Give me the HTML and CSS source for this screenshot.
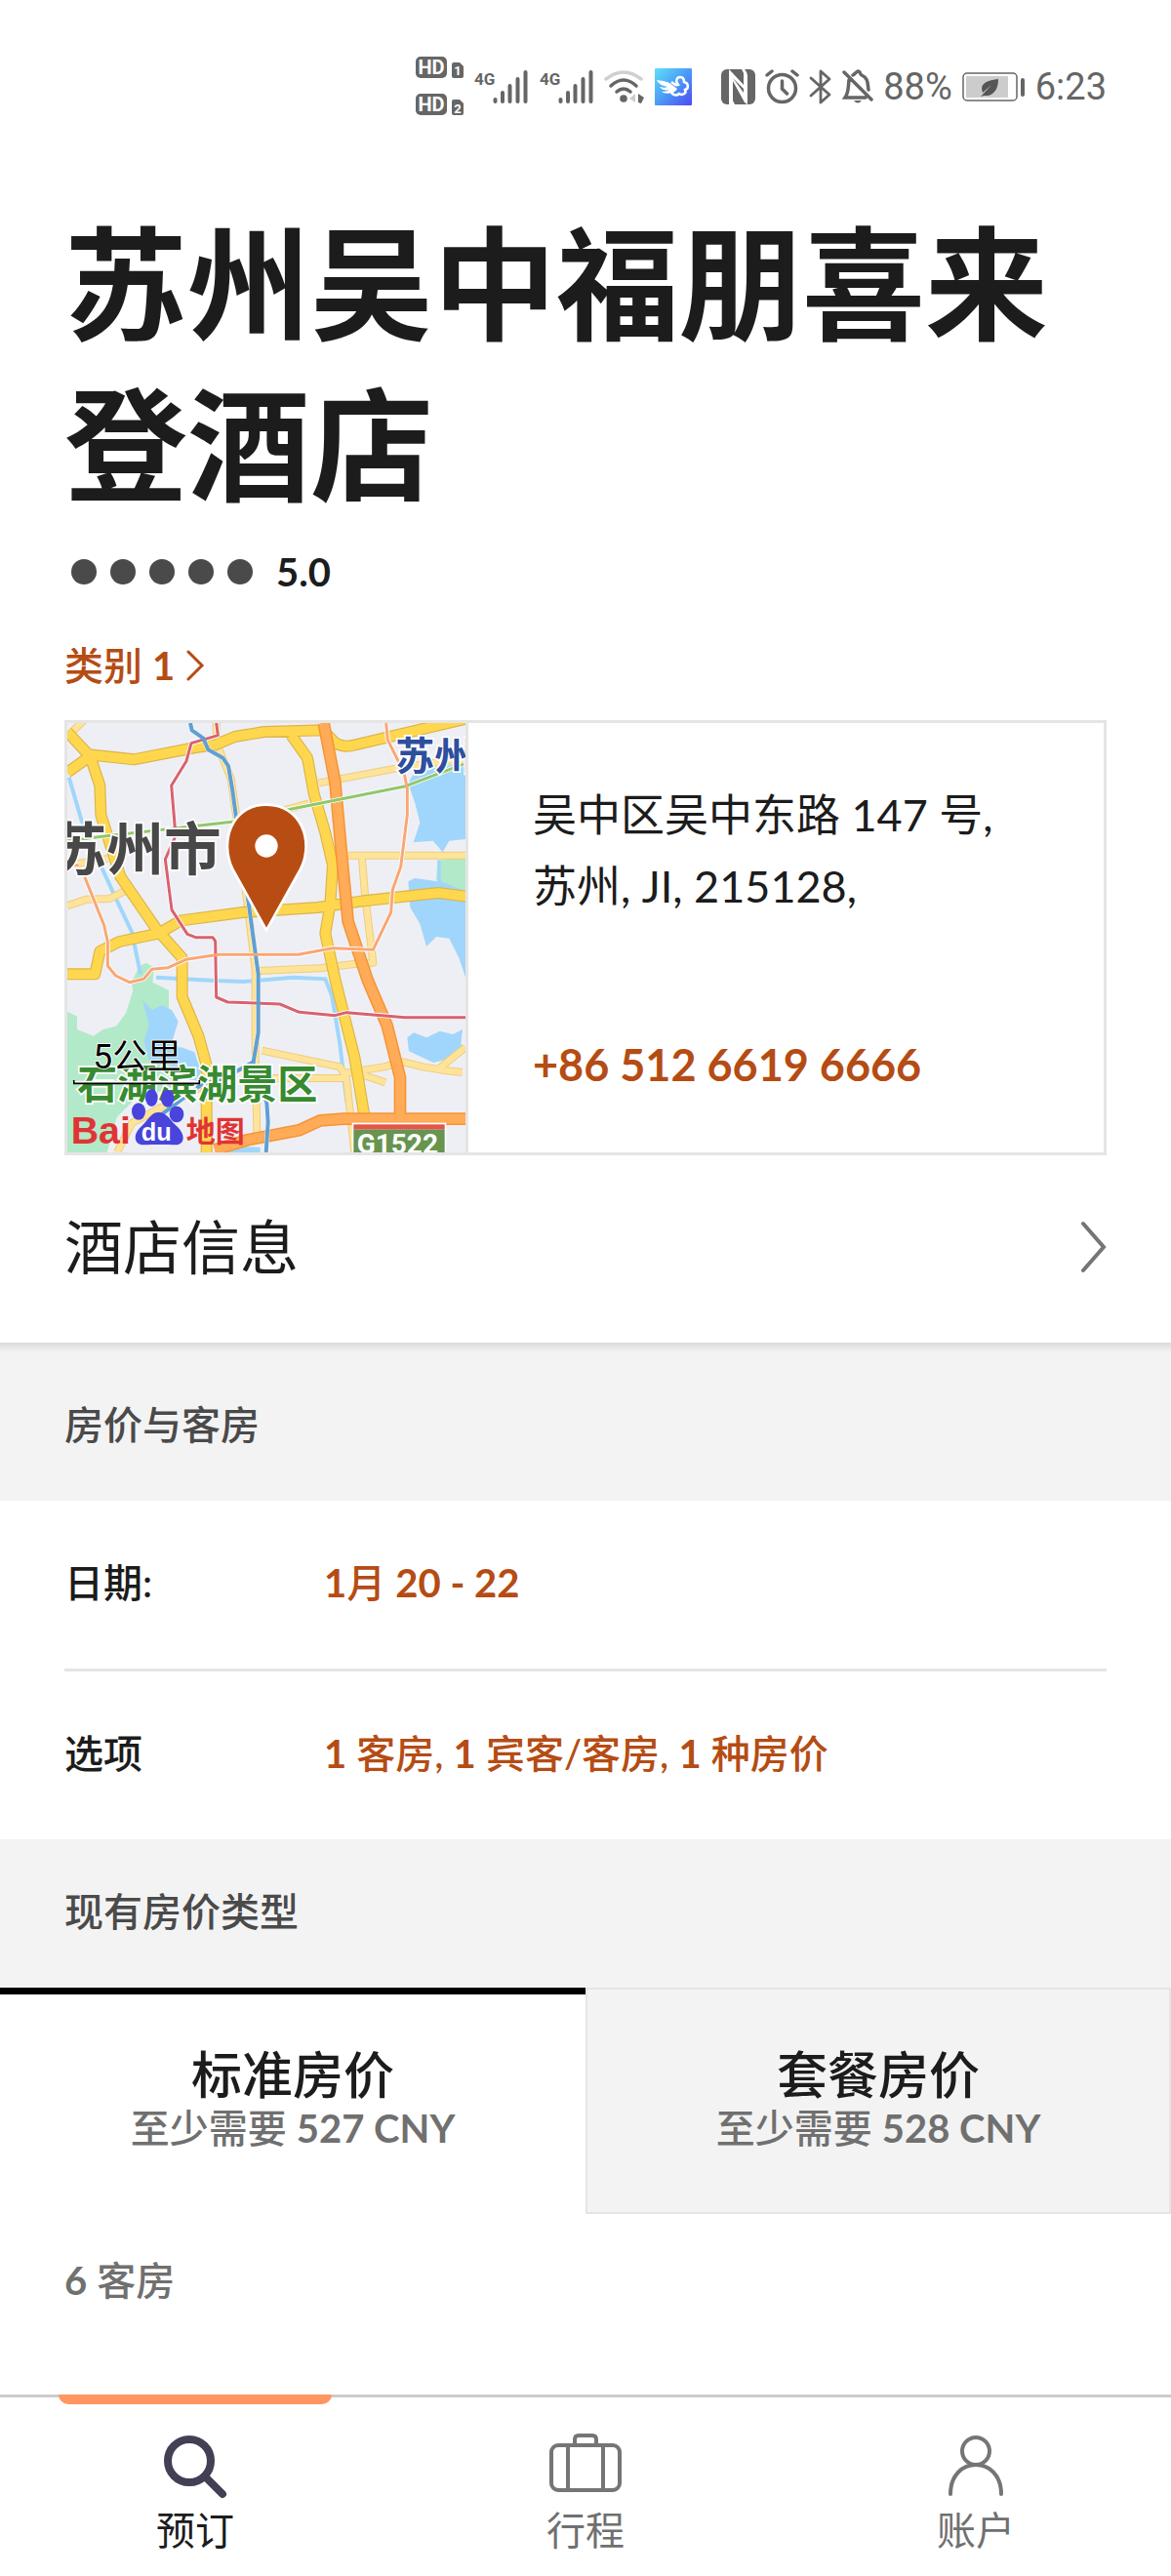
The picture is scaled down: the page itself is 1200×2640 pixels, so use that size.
FILE: index.html
```html
<!DOCTYPE html>
<html lang="zh-CN">
<head>
    <meta charset="UTF-8">
    <meta name="viewport" content="width=device-width, initial-scale=1.0">
    <title>苏州吴中福朋喜来登酒店</title>
    <link rel="stylesheet" href="styles.css">
</head>
<body>
    <header class="status-bar">
        <svg class="hd" width="50" height="62" viewBox="0 0 50 62">
            <rect x="0" y="0" width="32" height="22" rx="5"/>
            <text class="hd-text" x="16" y="18">HD</text>
            <path d="M37 8q0-2 2-2h6l4 4v10q0 2-2 2h-8q-2 0-2-2z"/>
            <text class="sim-text" x="43" y="19">1</text>
            <rect x="0" y="38" width="32" height="22" rx="5"/>
            <text class="hd-text" x="16" y="56">HD</text>
            <path d="M37 46q0-2 2-2h6l4 4v10q0 2-2 2h-8q-2 0-2-2z"/>
            <text class="sim-text" x="43" y="58">2</text>
        </svg>
        <div class="signals">
            <svg width="56" height="36" viewBox="0 0 56 36">
                <text class="net-text" x="0" y="16">4G</text>
                <path class="bars" d="M21.500 31v2M29 24v9M36.500 17v16M44.500 10v23M52.500 3v30"/>
            </svg>
            <svg width="56" height="36" viewBox="0 0 56 36">
                <text class="net-text" x="0" y="16">4G</text>
                <path class="bars" d="M21.500 31v2M29 24v9M36.500 17v16M44.500 10v23M52.500 3v30"/>
            </svg>
        </div>
        <svg width="42" height="36" viewBox="0 0 42 36">
            <g fill="none" stroke-width="3.500" stroke-linecap="round">
                <path stroke="#d0d0d0" d="M2 10Q20-4 38 10"/>
                <path stroke="#666" d="M7 17Q20 5 33 17M13 23Q20 17 27 23"/>
            </g>
            <circle cx="20" cy="30" r="3.800"/>
            <path fill="#ccc" d="M32 25v9l-6-4z"/>
            <path d="M35 25l6 4-3 6-3-1z"/>
        </svg>
        <svg class="app-icon" width="38" height="38" viewBox="0 0 38 38">
            <defs>
                <linearGradient id="sky" x1="0" y1="0" x2="1" y2="1">
                    <stop offset="0" stop-color="#5fe0fb"/>
                    <stop offset=".5" stop-color="#4b9bf5"/>
                    <stop offset="1" stop-color="#5048f4"/>
                </linearGradient>
            </defs>
            <rect width="38" height="38" rx="1" fill="url(#sky)"/>
            <path fill="#fff" d="M2 12c8 1 13 2 17 6l4 3c-2 5-12 6-16 3 4 0 6-1 8-2-4 1-8 0-10-3 4 1 6 1 8 0-5-1-9-3-11-7z"/>
            <path fill="none" stroke="#fff" stroke-width="2.500" d="M17 14c4 3 5 4 7 3-3-3-2-8 2-8 4 0 4 3 4 5 5 1 5 7 1 8 2 4-3 6-6 4-3 3-8 1-8-3"/>
        </svg>
        <svg class="nfc" width="35" height="36" viewBox="0 0 35 36">
            <rect width="35" height="36" rx="6"/>
            <path fill="#fff" d="M8 36V0l3 3 12 13V4l-2-4h3q3 3 3 8v28l-3-2-12-22v20l2 4z"/>
            <path d="M12 9l11 11v4z"/>
        </svg>
        <svg width="35" height="36" viewBox="0 0 35 36">
            <g fill="none" stroke="#666" stroke-width="3.500" stroke-linecap="round">
                <circle cx="17.500" cy="19.500" r="14"/>
                <path d="M17.500 12v8l5 5M2 6l5-4M28 2l5 4"/>
            </g>
        </svg>
        <svg class="bluetooth" width="24" height="36" viewBox="0 0 24 36">
            <path fill="none" stroke="#666" stroke-width="2.800" stroke-linejoin="round" stroke-linecap="round" d="M2 9l19 17-9 8V2l9 8L2 27"/>
        </svg>
        <svg class="bell" width="32" height="36" viewBox="0 0 32 36">
            <g fill="none" stroke="#666" stroke-width="3.500" stroke-linecap="round">
                <path d="M2 3l28 28M7 11c-1 8 0 12-4 18h21M11 6c2-1 3-3 5-4 3 0 2 3 4 4 7 3 6 9 7 15"/>
            </g>
            <path d="M12 32h8q-4 5-8 0z"/>
        </svg>
        <span class="battery-level">88%</span>
        <svg class="battery" width="65" height="31" viewBox="0 0 65 31">
            <rect x="1" y="1" width="55" height="28" rx="4" fill="none" stroke="#666" stroke-width="1.500"/>
            <rect x="4" y="4" width="43" height="22" rx="1" fill="#ccc"/>
            <path fill="#555" d="M37 7c-10 1-20 4-16 14l9-8-11 12 3-1c9 1 15-5 15-17z"/>
            <rect x="60" y="6" width="4" height="19" rx="2"/>
        </svg>
        <time class="clock">6:23</time>
    </header>

    <main>
        <section class="hotel">
            <h1>苏州吴中福朋喜来登酒店</h1>
            <div class="rating">
                <span class="dot"></span>
                <span class="dot"></span>
                <span class="dot"></span>
                <span class="dot"></span>
                <span class="dot"></span>
                <b class="score">5.0</b>
            </div>
            <a class="category" href="#category">
                <span>类别 <b>1</b></span>
                <svg width="20" height="32" viewBox="0 0 20 32"><path fill="none" stroke="#b54c14" stroke-width="3" stroke-linecap="round" d="M2 2l14 14L2 30"/></svg>
            </a>

            <div class="location">
                <svg class="map" viewBox="27 33 1224 1320" preserveAspectRatio="xMidYMid slice">
                    <rect x="27" y="33" width="1224" height="1320" fill="#eeeff5"/>
                    <!-- parks -->
                    <path fill="#b2e9c9" d="M27 920l30 15v40l50 20 30-20 40-10 30-40 22-70-5-25 25-50 20-10 25 15-5 45 50 25v60l10 90 50 60-10 80-150 40-60 60-30 108H27zM1165 455l86-10v120l-90-50z"/>
                    <!-- water -->
                    <path fill="#a0d6fb" d="M1075 220l20-40 156-25v235l-50 5-20 35-30-35-60 5 20-60-15-60zM1075 520l20-10 70 10v-65h10v65l65 25 11 30v240l-20-60-30-60-40-5-30 30-20-70-30-50zM1072 1000l20-15 40 15 40-20 40 10 30-15-5 45 10 10-45 35-50 12-75-35zM258 885l30 30 30-15 30 15 20 35-15 50-15 35 40-5 40 15 20 60-20 50-50-40-30-40-60-5-15-60 15-50zM500 1350q50-20 120-12v15H500z"/>
                    <path class="river" d="M32 200l38 130 50 120 60 130 45 95 27 130M300 815l180 10 90 3 150-13 100 5 20 50 25 150 20 170 25 100"/>
                    <!-- minor roads -->
                    <g class="road-minor-edge">
                        <path id="minor" d="M27 595l60-20 70-2 50-25M800 217l240-45 210-30M485 33v60l45 110 20 140 25 200 30 250v250l5 250M890 440h361M932 440l10 120 25 210-65 5-100 12-190 8M625 1040l240 50 20 35 25 228M880 1110l60-10 60-10 60-15 60 15 60 10 61 7M920 1110l85 28M1170 1095l81-65M620 1125h260M180 1353l45-90 150-80 80-40M30 470l120-20M640 315l130-35M27 75l50-50"/>
                    </g>
                    <g class="road-minor">
                        <use href="#minor"/>
                    </g>
                    <!-- main roads -->
                    <g class="road-edge">
                        <path id="major" d="M27 60l65 70 140 15 190-37 60-8 60-25 90-15 180-5 40 40q25 15 60 5l340-80M27 185l70-50 30 90 3 90 60 190 110 160 80 90v120l50 120 25 90v278M715 70l50 70 20 110 35 120 23 100-8 120-15 90 30 140 30 120 30 120 30 180M27 805h85l15-70 60-30 120-25 70-40 190-25 230-15 140-20 230-25 80 10 60 15"/>
                    </g>
                    <g class="road-major">
                        <use href="#major"/>
                    </g>
                    <!-- highways -->
                    <g class="highway-edge">
                        <path id="highway" d="M815 33l35 180 20 220 20 210 60 180 60 140 40 160v120M480 1345l100-30 160-30 65-30 70-5h376"/>
                    </g>
                    <g class="highway">
                        <use href="#highway"/>
                    </g>
                    <!-- metro lines -->
                    <g class="metro-casing">
                        <path id="metro-green" d="M27 395l120-15 400-45 170-38 350-70 184-70"/>
                        <path id="metro-red" d="M485 33l5 38-82 24-15 55-46 75 13 155-32 72 20 155 48 75 25 10h53l8 12 3 172 35 15 160 6 60 25 110 10 35-9 180 15h186"/>
                        <path id="metro-blue" d="M405 33l5 22 35 25 15 35 45 25 17 25 12 70 15 110 35 240 30 220v180l-15 90-90 50-70 20-120 90-1 93M600 1080l40 120 4 60-6 93"/>
                        <path id="metro-orange" d="M80 505l60 150 11 50v75l25 30 42 20 44-10 25-30 50-5 55-25 100-15h245l105-20 125 5 55-115 5-70 25-70 20-160v-80l-10-50-50-100-5-52M27 470h35"/>
                    </g>
                    <g class="metro">
                        <use class="metro-green" href="#metro-green"/>
                        <use class="metro-red" href="#metro-red"/>
                        <use class="metro-blue" href="#metro-blue"/>
                        <use class="metro-orange" href="#metro-orange"/>
                    </g>
                    <!-- labels -->
                    <text class="map-city" x="-28" y="487">苏州市</text>
                    <text class="map-station" x="1036" y="176">苏州</text>
                    <text class="map-park" x="58" y="1187">石湖滨湖景区</text>
                    <text class="map-scale" x="106" y="1094">5公里</text>
                    <path fill="none" stroke="#fff" stroke-width="10" d="M42 1138h397"/>
                    <path fill="none" stroke="#000" stroke-width="5" d="M47 1131v10h386v-10"/>
                    <g fill="#4844dc">
                        <ellipse cx="246" cy="1227" rx="21" ry="26"/>
                        <ellipse cx="286" cy="1185" rx="19" ry="27"/>
                        <ellipse cx="335" cy="1187" rx="20" ry="27"/>
                        <ellipse cx="363" cy="1236" rx="22" ry="25"/>
                        <path d="M308 1230c25 0 35 25 55 42 30 28 24 58-3 58-25-1-70-1-100 0-28 0-32-32-8-54 25-22 30-46 56-46z"/>
                    </g>
                    <text class="baidu-red" x="38" y="1327">Bai</text>
                    <text class="baidu-white" x="254" y="1317">du</text>
                    <text class="baidu-map" x="392" y="1321">地图</text>
                    <rect x="902" y="1262" width="290" height="95" fill="#fff"/>
                    <rect x="907" y="1267" width="280" height="16" fill="#e2574a"/>
                    <rect x="907" y="1283" width="280" height="75" fill="#67944f"/>
                    <text class="map-highway" x="1042" y="1357">G1522</text>
                    <!-- hotel pin -->
                    <path fill="#b84d14" stroke="#fff" stroke-width="8" d="M639 670L535 482C495 400 530 284 639 284s147 116 105 198z"/>
                    <circle cx="639" cy="411" r="35" fill="#fff"/>
                </svg>
                <div class="contact">
                    <address>吴中区吴中东路 147 号,<br>苏州, JI, 215128,</address>
                    <a class="phone" href="tel:+8651266196666">+86 512 6619 6666</a>
                </div>
            </div>
        </section>

        <a class="hotel-info" href="#info">
            <span>酒店信息</span>
            <svg width="26" height="54" viewBox="0 0 26 54"><path fill="none" stroke="#757575" stroke-width="4" stroke-linecap="round" d="M2 3l21 24L2 51"/></svg>
        </a>
        <div class="shadow"></div>

        <h2 class="section-title">房价与客房</h2>
        <div class="stay">
            <div class="stay-row">
                <span class="stay-label">日期:</span>
                <a href="#dates"><b>1</b>月 <b>20 - 22</b></a>
            </div>
            <div class="stay-row">
                <span class="stay-label">选项</span>
                <a href="#options"><b>1</b> 客房, <b>1</b> 宾客/客房, <b>1</b> 种房价</a>
            </div>
        </div>

        <h2 class="section-title">现有房价类型</h2>
        <div class="tabs">
            <button class="tab active" type="button">
                <span class="tab-name">标准房价</span>
                <span class="tab-price">至少需要 <b>527 CNY</b></span>
            </button>
            <button class="tab" type="button">
                <span class="tab-name">套餐房价</span>
                <span class="tab-price">至少需要 <b>528 CNY</b></span>
            </button>
        </div>
        <p class="room-count"><b>6</b> 客房</p>
    </main>

    <nav class="bottom-nav">
        <a class="nav-item current" href="#book">
            <svg width="76" height="68" viewBox="0 0 76 68">
                <g fill="none" stroke="#433f54" stroke-linecap="round">
                    <circle cx="32" cy="29" r="22" stroke-width="8"/>
                    <path stroke-width="8" d="M49 46l17 17"/>
                </g>
            </svg>
            <span>预订</span>
        </a>
        <a class="nav-item" href="#trips">
            <svg width="76" height="68" viewBox="0 0 76 68">
                <g fill="none" stroke="#757575" stroke-width="4">
                    <rect x="3" y="13" width="70" height="46" rx="7"/>
                    <path d="M20 13v46M56 13v46M27 13V7q0-4 4-4h14q4 0 4 4v6"/>
                </g>
            </svg>
            <span>行程</span>
        </a>
        <a class="nav-item" href="#account">
            <svg width="76" height="68" viewBox="0 0 76 68">
                <g fill="none" stroke="#757575" stroke-width="4" stroke-linecap="round">
                    <circle cx="38" cy="19" r="14"/>
                    <path d="M12 63c0-40 52-40 52 0"/>
                </g>
            </svg>
            <span>账户</span>
        </a>
    </nav>
</body>
</html>
```

FILE: styles.css
```css
* {
    box-sizing: border-box;
}
body {
    margin: 0;
    min-height: 100vh;
    display: flex;
    flex-direction: column;
    background: #fff;
    color: #1c1c1c;
    font-family: Lato, "Noto Sans CJK SC", sans-serif;
    font-size: 40px;
    line-height: 48px;
}
a {
    color: #b54c14;
    text-decoration: none;
}
h1, h2, p {
    margin: 0;
}
svg {
    display: block;
    flex: none;
}

/* status bar */
.status-bar {
    display: flex;
    align-items: center;
    justify-content: flex-end;
    gap: 10px;
    height: 178px;
    padding: 0 66px;
    color: #666;
    font-family: Roboto, sans-serif;
    font-size: 38px;
}
.status-bar svg {
    fill: #666;
}
.signals {
    display: flex;
    gap: 11px;
}
.hd-text {
    fill: #fff;
    font-size: 20px;
    font-weight: bold;
    text-anchor: middle;
}
.sim-text {
    fill: #fff;
    font-size: 13px;
    font-weight: bold;
    text-anchor: middle;
}
.net-text {
    font-size: 17px;
    font-weight: bold;
}
.bars {
    fill: none;
    stroke: #666;
    stroke-width: 4;
    stroke-linecap: round;
}
.nfc {
    margin-left: 20px;
}

/* hotel */
.hotel {
    padding: 30px 66px 0;
}
h1 {
    font-size: 126px;
    line-height: 165px;
    font-weight: bold;
}
.rating {
    display: flex;
    align-items: center;
    gap: 14px;
    margin-top: 24px;
    padding-left: 7px;
}
.dot {
    width: 26px;
    height: 26px;
    border-radius: 50%;
    background: #4a4a4a;
}
.score {
    margin-left: 10px;
}
.category {
    display: flex;
    align-items: center;
    gap: 12px;
    margin-top: 48px;
    font-weight: 500;
}
.location {
    display: flex;
    margin-top: 32px;
    border: 3px solid #e5e5e5;
}
.map {
    width: 411px;
    height: 440px;
    border-right: 3px solid #e5e5e5;
}
.contact {
    display: flex;
    flex-direction: column;
    justify-content: space-between;
    padding: 58px 66px 62px;
    font-size: 45px;
}
address {
    font-style: normal;
    line-height: 73px;
}
.phone {
    font-weight: bold;
    line-height: 56px;
}

/* map */
.river {
    fill: none;
    stroke: #a0d6fb;
    stroke-width: 12;
}
.road-minor-edge, .road-minor, .road-edge, .road-major, .highway-edge, .highway, .metro-casing, .metro {
    fill: none;
    stroke-linejoin: round;
}
.road-minor-edge {
    stroke: #efcd7c;
    stroke-width: 24;
}
.road-minor {
    stroke: #fee39b;
    stroke-width: 18;
}
.road-edge {
    stroke: #dcb548;
    stroke-width: 36;
}
.road-major {
    stroke: #fed74f;
    stroke-width: 29;
}
.highway-edge {
    stroke: #f69435;
    stroke-width: 38;
}
.highway {
    stroke: #ffab57;
    stroke-width: 29;
}
.metro-casing {
    stroke: #fff;
    stroke-width: 14;
}
.metro {
    stroke-width: 9;
}
.metro-green {
    stroke: #91c76a;
}
.metro-red {
    stroke: #d8626e;
}
.metro-blue {
    stroke: #5f9fd3;
    stroke-width: 12;
}
.metro-orange {
    stroke: #f8a775;
}
.map-city, .map-station, .map-park, .map-scale {
    paint-order: stroke;
    stroke: #fff;
    stroke-width: 10px;
    font-weight: bold;
}
.map-city {
    fill: #484848;
    font-size: 176px;
}
.map-station {
    fill: #2d4f9e;
    font-size: 120px;
}
.map-park {
    fill: #378a30;
    font-size: 123px;
}
.map-scale {
    fill: #000;
    font-family: Roboto, "Noto Sans CJK SC", sans-serif;
    font-size: 106px;
    font-weight: normal;
    stroke-width: 5px;
}
.baidu-red, .baidu-map {
    fill: #e03434;
    font-family: "Liberation Sans", "Noto Sans CJK SC", sans-serif;
    font-weight: bold;
}
.baidu-red {
    font-size: 118px;
}
.baidu-map {
    font-size: 90px;
}
.baidu-white {
    fill: #fff;
    font-family: "Liberation Sans", sans-serif;
    font-size: 76px;
    font-weight: bold;
}
.map-highway {
    fill: #fff;
    font-family: Roboto, sans-serif;
    font-size: 84px;
    font-weight: bold;
    text-anchor: middle;
}

.hotel-info {
    display: flex;
    align-items: center;
    justify-content: space-between;
    padding: 58px 66px 62px;
    color: #1c1c1c;
    font-size: 60px;
    line-height: 72px;
}
.shadow {
    height: 10px;
    background: linear-gradient(#dadada, #f3f3f3);
}
.section-title {
    padding: 50px 66px 54px;
    background: #f3f3f3;
    color: #4a4a4a;
    font-size: 40px;
    font-weight: 500;
}

/* stay */
.stay {
    padding: 0 66px;
    font-weight: 500;
}
.stay-row {
    display: flex;
    padding: 60px 0 64px;
}
.stay-row + .stay-row {
    border-top: 3px solid #e5e5e5;
}
.stay-label {
    width: 266px;
}

/* rate tabs */
.tabs {
    display: grid;
    grid-template-columns: 1fr 1fr;
}
.tab {
    display: flex;
    flex-direction: column;
    align-items: center;
    padding: 56px 20px 62px;
    border: 2px solid #e5e5e5;
    background: #f3f3f3;
    color: #1c1c1c;
    font-family: inherit;
    font-weight: 500;
}
.tab.active {
    padding-top: 51px;
    border-color: #fff;
    border-top: 7px solid #000;
    border-left: 0;
    border-right: 0;
    background: #fff;
}
.tab-name {
    font-size: 52px;
    line-height: 62px;
}
.tab-price {
    color: #707070;
    font-size: 40px;
    line-height: 48px;
}
.room-count {
    padding: 44px 66px;
    color: #707070;
    font-weight: 500;
}

/* bottom nav */
.bottom-nav {
    display: grid;
    grid-template-columns: 1fr 1fr 1fr;
    margin-top: auto;
    border-top: 3px solid #ccc;
}
.nav-item {
    position: relative;
    display: flex;
    flex-direction: column;
    align-items: center;
    gap: 8px;
    padding: 36px 0 23px;
    color: #707070;
}
.nav-item.current {
    color: #1c1c1c;
}
.nav-item.current::before {
    content: "";
    position: absolute;
    top: -3px;
    left: 15%;
    right: 15%;
    height: 10px;
    border-radius: 0 0 10px 10px;
    background: #ff9662;
}
```
